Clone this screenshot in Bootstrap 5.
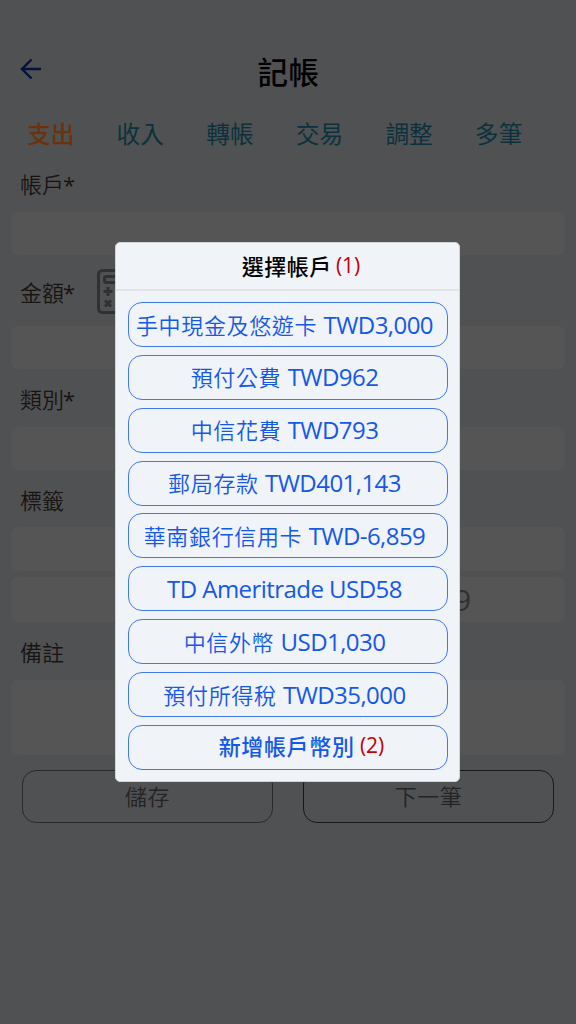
<!DOCTYPE html>
<html lang="zh-Hant">
<head>
<meta charset="utf-8">
<meta name="viewport" content="width=device-width, initial-scale=1">
<title>記帳</title>
<link href="https://cdn.jsdelivr.net/npm/bootstrap@5.3.0/dist/css/bootstrap.min.css" rel="stylesheet">
<style>
body{width:576px;height:1024px;overflow:hidden;background:#505153;color:#171412;font-family:"Open Sans","Noto Sans CJK TC",sans-serif;font-size:22px;font-weight:350}
.topbar{height:105px;padding:37px 20px 0;display:grid;grid-template-columns:60px 1fr 60px}
.topbar svg{margin-top:20px}
.topbar h1{font-size:30.5px;font-weight:500;line-height:70px;color:#000;letter-spacing:.6px;padding-left:1px}
.tabs{height:58px;padding-left:27px}
.tabs a{width:89.6px;color:#0c313c;text-decoration:none;font-size:23.7px;font-weight:400;line-height:58px;white-space:nowrap}
.tabs a.active{color:#6b330b;font-weight:500}
.field-label{padding-left:20px;line-height:42px;height:49px}
.star{font-weight:400;margin-left:-1px}
.entry{margin:0 11px;height:43px;border-radius:6px;background:#555555}
.actions{padding:0 22px;margin-top:15px;gap:30px}
.actions .btn{height:53px;border-radius:14px;border:1px solid #292a2b;color:#242424;font-size:22px;font-weight:350;line-height:34px;padding-top:8px;padding-bottom:10px;letter-spacing:.5px;background:transparent}
.actions .btn:last-child{border-color:#171819}
.account-dialog{width:345px;height:540px;max-width:none;margin:0 1px 0 0}
.account-dialog .modal-content{height:540px;background:#f0f3f7;border:1px solid #d2d4d6;border-radius:5px;color:#000}
.account-dialog .modal-header{height:48px;flex:none;padding:0;border-bottom:2px solid #e3e4e6}
.account-dialog h2{font-size:22px;font-weight:500;margin:0;line-height:46px;padding-left:27px;letter-spacing:.5px}
.note{color:#c40000;font-size:21px;font-weight:400;letter-spacing:0;position:relative;top:-2px;margin-left:-2px}
.account-list{padding:11px 11px 0 12px;gap:7.87px}
.account-list .btn{height:45px;flex:none;border:1px solid #3f79ee;border-radius:14px;color:#1458e8;font-size:22px;font-weight:350;line-height:41px;padding:0 7px 0 0;letter-spacing:.65px;white-space:nowrap}
.lt{font-size:24px;font-weight:400;letter-spacing:-.55px}
.account-list .new-account{font-weight:500;padding-left:27px;padding-right:0}
.new-account .note{margin-left:-1px}
</style>
</head>
<body>
<header class="topbar">
<svg width="22" height="24" viewBox="0 0 22 24" fill="none" stroke="#04123d" stroke-width="2.4"><path d="M21 12H2M11.500 2.500L2 12l9.500 9.500"/></svg>
<h1 class="text-center m-0">記帳</h1>
</header>
<nav class="tabs d-flex"><a class="active" href="#">支出</a><a href="#">收入</a><a href="#">轉帳</a><a href="#">交易</a><a href="#">調整</a><a href="#">多筆</a></nav>
<main>
<div class="field-label">帳戶<span class="star">*</span></div>
<div class="entry"></div>
<div class="field-label d-flex" style="height:71px;padding-top:16px">金額<span class="star">*</span>
<svg style="margin:-2px 0 0 22px" width="40" height="46" viewBox="0 0 40 46" fill="none" stroke="#303132" stroke-width="3"><rect x="1.500" y="1.500" width="36" height="42" rx="4"/><rect x="7.500" y="7.500" width="24" height="6" rx="2"/><path d="M6.500 22.500h9M11 18v9M8 31.500l6 6M14 31.500l-6 6M22 22.500h9M22 33h9"/></svg></div>
<div class="entry"></div>
<div class="field-label" style="height:58px;padding-top:9px">類別<span class="star">*</span></div>
<div class="entry"></div>
<div class="field-label" style="height:57px;padding-top:9px">標籤</div>
<div class="entry" style="height:44px"></div>
<div class="entry text-end" style="height:45px;margin-top:6px;padding-right:94px;color:#303030;font-size:29px;line-height:46px;font-weight:400">9</div>
<div class="field-label" style="height:58px;padding-top:9px">備註</div>
<div class="entry" style="height:75px"></div>
<div class="actions d-flex"><button class="btn flex-fill w-50">儲存</button><button class="btn flex-fill w-50">下一筆</button></div>
</main>
<div class="modal d-flex align-items-center justify-content-center" role="dialog" aria-modal="true">
<div class="modal-dialog account-dialog"><div class="modal-content">
<div class="modal-header justify-content-center"><h2>選擇帳戶 <span class="note">(1)</span></h2></div>
<div class="account-list d-flex flex-column">
<button class="btn">手中現金及悠遊卡 <span class="lt">TWD3,000</span></button>
<button class="btn">預付公費 <span class="lt">TWD962</span></button>
<button class="btn">中信花費 <span class="lt">TWD793</span></button>
<button class="btn">郵局存款 <span class="lt">TWD401,143</span></button>
<button class="btn">華南銀行信用卡 <span class="lt">TWD-6,859</span></button>
<button class="btn"><span class="lt">TD Ameritrade USD58</span></button>
<button class="btn">中信外幣 <span class="lt">USD1,030</span></button>
<button class="btn">預付所得稅 <span class="lt">TWD35,000</span></button>
<button class="btn new-account">新增帳戶幣別 <span class="note">(2)</span></button>
</div></div></div></div>
<script src="https://cdn.jsdelivr.net/npm/bootstrap@5.3.0/dist/js/bootstrap.bundle.min.js"></script>
</body>
</html>
